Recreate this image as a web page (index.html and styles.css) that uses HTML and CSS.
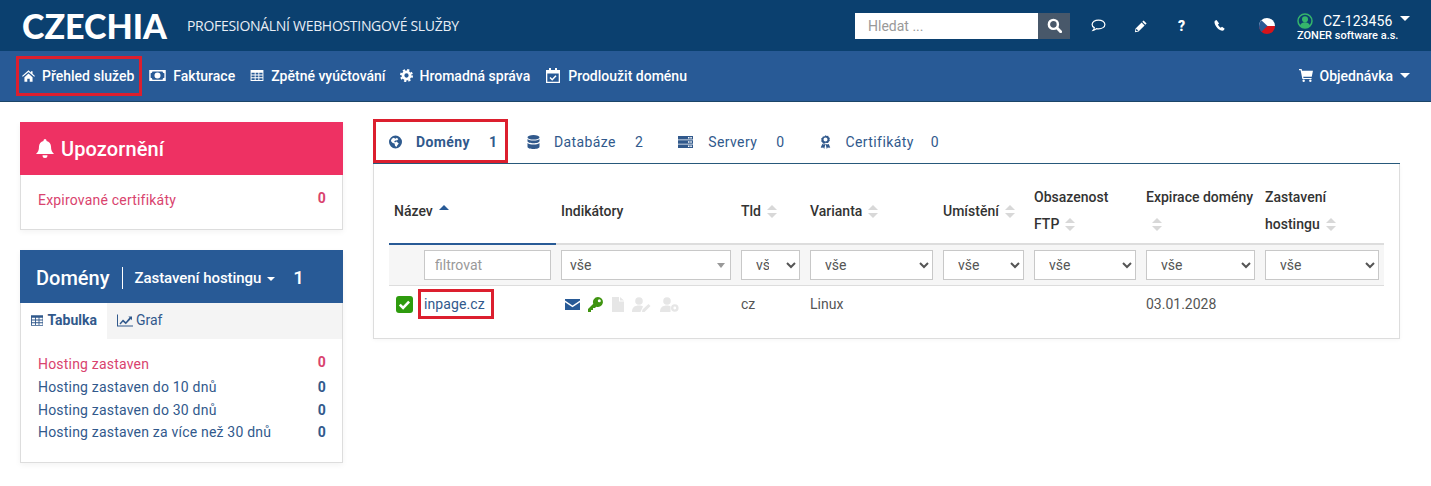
FILE: index.html
```html
<!DOCTYPE html>
<html lang="cs">
<head>
<meta charset="utf-8">
<title>Czechia</title>
<link rel="stylesheet" href="styles.css">
</head>
<body>
<header class="top">
  <div class="logo">CZECHIA</div>
  <div class="slogan">PROFESIONÁLNÍ WEBHOSTINGOVÉ SLUŽBY</div>
  <div class="search">
    <input class="search-input" type="text" placeholder="Hledat ...">
    <button class="search-btn" type="button"><svg class="ic14" viewBox="0 0 16 16"><circle cx="6.8" cy="6.8" r="4.8" fill="none" stroke="#fff" stroke-width="2.6"/><path d="M10.5 10.5L14.6 14.6" stroke="#fff" stroke-width="3" stroke-linecap="round"/></svg></button>
  </div>
  <div class="tools">
    <svg class="tool t-comment" viewBox="0 0 16 16"><path d="M8 2.2c3.7 0 6.8 2 6.8 4.7S11.700 11.500 8 11.500c-.8 0-1.500-.1-2.200-.2-.9.9-2.100 1.700-3.600 1.900.8-.9 1.300-1.800 1.300-2.900C1.900 9.500 1.200 8.300 1.200 6.900 1.200 4.200 4.300 2.200 8 2.200z" fill="none" stroke="#fff" stroke-width="1.300"/></svg>
    <svg class="tool t-pencil" viewBox="0 0 16 16"><path d="M11 1.600l3.400 3.400-1.500 1.500-3.400-3.400zM8.700 3.900l3.400 3.400-6.900 6.900-4.200.8.800-4.200zM2.700 11l-.5 2.800 2.800-.5z" fill="#fff" fill-rule="evenodd"/></svg>
    <span class="tool-q">?</span>
    <svg class="tool t-phone" viewBox="0 0 16 16"><path d="M4.400 1.200L2.400 2.200C1.500 3 1.700 5 2.800 7.300c1.300 2.700 3.500 5 5.800 6.300 2 1.100 3.700 1.200 4.600.3l1.200-1.800-3.300-2.600-1.600 1.200c-1-.5-2.800-2.500-3.400-4l1.400-1.300z" fill="#fff"/></svg>
    <svg class="tool t-flag" viewBox="0 0 16 16"><defs><clipPath id="flagclip"><circle cx="8" cy="8" r="8"/></clipPath></defs><g clip-path="url(#flagclip)"><rect width="16" height="8" fill="#fff"/><rect y="8" width="16" height="8" fill="#d7141a"/><path d="M0 0L8.500 8 0 16z" fill="#2a5a94"/></g></svg>
  </div>
  <div class="account">
    <div class="acc-line">
      <svg class="acc-ic" viewBox="0 0 16 16"><circle cx="8" cy="8" r="7" fill="none" stroke="#35b56b" stroke-width="1.500"/><circle cx="8" cy="6.200" r="3" fill="#35b56b"/><path d="M2.900 13c.6-2.500 2.600-3.700 5.100-3.700s4.500 1.200 5.100 3.700c-1.300 1.300-3 2-5.100 2s-3.800-.7-5.100-2z" fill="#35b56b"/></svg>
      <span class="acc-id">CZ-123456</span>
      <span class="caret acc-caret"></span>
    </div>
    <div class="acc-name">ZONER software a.s.</div>
  </div>
</header>

<nav class="nav">
  <a class="nav-item mark">
    <svg class="nav-ic i-home" viewBox="0 0 16 14"><path d="M8 0L0 6.900l1 1.100L8 2l7 6 1-1.100-3-2.600V1h-2v1.600z M3 8.500V14h3.500v-3.500h3V14H13V8.500L8 3.800z" fill="#fff"/></svg>Přehled služeb</a>
  <a class="nav-item">
    <svg class="nav-ic i-money" viewBox="0 0 18 12"><path fill-rule="evenodd" d="M0 0h18v12H0zM1.500 3.500v5a2 2 0 0 1 2 2h11a2 2 0 0 1 2-2v-5a2 2 0 0 1-2-2h-11a2 2 0 0 1-2 2zM9 2.700a3.300 3.300 0 1 1 0 6.600 3.300 3.300 0 0 1 0-6.600z" fill="#fff"/><rect x="8.300" y="4.200" width="1.600" height="3.800" fill="#fff"/></svg>Fakturace</a>
  <a class="nav-item">
    <svg class="nav-ic i-table" viewBox="0 0 14 12"><path fill-rule="evenodd" d="M0 0h14v12H0zM1 3v2h3.500V3zm4.500 0v2h3V3zm4 0v2H13V3zM1 6v2h3.500V6zm4.500 0v2h3V6zm4 0v2H13V6zM1 9v2h3.500V9zm4.500 0v2h3V9zm4 0v2H13V9z" fill="#fff"/></svg>Zpětné vyúčtování</a>
  <a class="nav-item">
    <svg class="nav-ic i-cog" viewBox="0 0 14 14"><circle cx="7" cy="7" r="3.800" fill="none" stroke="#fff" stroke-width="3"/><circle cx="7" cy="7" r="6" fill="none" stroke="#fff" stroke-width="2" stroke-dasharray="2.400 2.310"/></svg>Hromadná správa</a>
  <a class="nav-item">
    <svg class="nav-ic i-cal" viewBox="0 0 14 15"><path fill-rule="evenodd" d="M3 0h2v2h4V0h2v2h3v13H0V2h3zM1.300 5.500v8.200h11.400V5.500z" fill="#fff"/><path d="M4 9.500l2.200 2.200L10 7.800" fill="none" stroke="#fff" stroke-width="1.500"/></svg>Prodloužit doménu</a>
  <a class="nav-item nav-order">
    <svg class="nav-ic i-cart" viewBox="0 0 15 14"><path d="M0 0h2.800l.4 1.800H15l-1.300 6.500H4.500l.3 1.300h8.700v1.200H3.600L1.700 1.300H0z" fill="#fff"/><circle cx="5" cy="12.700" r="1.300" fill="#fff"/><circle cx="12.200" cy="12.700" r="1.300" fill="#fff"/></svg>Objednávka<span class="caret order-caret"></span></a>
</nav>

<main class="page">
  <aside class="side">
    <section class="card">
      <h2 class="card-head pink">
        <svg class="bell" viewBox="0 0 18 19"><path d="M9 0a1.500 1.500 0 0 1 1.500 1.500v.4C13.300 2.500 15 4.800 15 7.500c0 4 1 5.500 3 7.500H0c2-2 3-3.500 3-7.500 0-2.700 1.700-5 4.500-5.600v-.4A1.500 1.500 0 0 1 9 0zM6.600 16.200h4.800A2.400 2.400 0 0 1 9 19a2.400 2.400 0 0 1-2.400-2.800z" fill="#fff"/></svg>Upozornění</h2>
      <div class="list list-one">
        <div class="row red"><span>Expirované certifikáty</span><b>0</b></div>
      </div>
    </section>
    <section class="card">
      <div class="card-head blue">
        <span class="dom-title">Domény</span>
        <span class="dom-filter">Zastavení hostingu<span class="caret dom-caret"></span></span>
        <span class="dom-count">1</span>
      </div>
      <div class="card-tabs">
        <span class="ctab active"><svg class="ctab-ic" viewBox="0 0 14 12"><path fill-rule="evenodd" d="M0 0h14v12H0zM1 3v2h3.500V3zm4.500 0v2h3V3zm4 0v2H13V3zM1 6v2h3.500V6zm4.500 0v2h3V6zm4 0v2H13V6zM1 9v2h3.500V9zm4.500 0v2h3V9zm4 0v2H13V9z"/></svg>Tabulka</span>
        <span class="ctab"><svg class="ctab-ic wide" viewBox="0 0 16 12"><path d="M0 0h1v11h15v1H0z"/><path d="M2.500 9l3.500-4 2.800 2.400L12.500 3l-1.200-1H15v3.800l-1.200-1.400-5 5.300L6 7.300 3.500 10z"/></svg>Graf</span>
      </div>
      <div class="list">
        <div class="row red"><span>Hosting zastaven</span><b>0</b></div>
        <div class="row"><span>Hosting zastaven do 10 dnů</span><b>0</b></div>
        <div class="row"><span>Hosting zastaven do 30 dnů</span><b>0</b></div>
        <div class="row"><span>Hosting zastaven za více než 30 dnů</span><b>0</b></div>
      </div>
    </section>
  </aside>

  <section class="content">
    <div class="tabs">
      <a class="tab active mark">
        <svg class="tab-ic" viewBox="0 0 14 14"><path fill-rule="evenodd" d="M7 0a7 7 0 1 1 0 14A7 7 0 0 1 7 0zM5 2.500L3 3.500 2 6l2 2 2 .5.500 2.500 1.500 1.500 1-2 1.500-2L8 6.500 6.500 7.500 5.500 6.500 7.500 5l1 .5L10 4 8.500 2.500 7 3.500z" fill="#2f5b8f"/></svg><span class="tab-label">Domény</span><span class="tab-num">1</span></a>
      <a class="tab">
        <svg class="tab-ic" viewBox="0 0 13 14"><ellipse cx="6.500" cy="2.300" rx="6" ry="2.300"/><path d="M.500 4v2c0 1.300 2.700 2.300 6 2.300s6-1 6-2.300V4c-1.200 1-3.500 1.500-6 1.500S1.700 5 .500 4zM.500 8v3.700C.5 13 3.200 14 6.500 14s6-1 6-2.300V8c-1.200 1-3.500 1.500-6 1.500S1.700 9 .500 8z"/></svg><span class="tab-label">Databáze</span><span class="tab-num">2</span></a>
      <a class="tab">
        <svg class="tab-ic ic-srv" viewBox="0 0 15 12"><path fill-rule="evenodd" d="M0 0h15v3.400H0zM0 4.300h15v3.400H0zM0 8.600h15V12H0zM10 1v1.400h1.500V1zm2.300 0v1.400h1.500V1zM10 5.300v1.400h1.500V5.300zm2.300 0v1.400h1.500V5.300zM10 9.600V11h1.500V9.600zm2.300 0V11h1.500V9.600z"/></svg><span class="tab-label">Servery</span><span class="tab-num">0</span></a>
      <a class="tab">
        <svg class="tab-ic ic-cert" viewBox="0 0 12 15"><path fill-rule="evenodd" d="M6 0l1.300.9 1.600-.1.600 1.500 1.300.9-.5 1.500.5 1.500-1.300.9-.6 1.500-1.600-.1L6 8.400l-1.300.9-1.600-.1-.6-1.500-1.300-.9.500-1.500-.5-1.500 1.300-.9.600-1.500 1.600.1zM6 2.500a2.200 2.200 0 1 0 0 4.400 2.200 2.200 0 0 0 0-4.400z"/><path d="M2.500 9.800l1.800.3L6 9.300l-1.400 5.700-1-1.500-1.800.3-1-.2zM9.500 9.800l-1.800.3L6 9.300l1.400 5.700 1-1.500 1.800.3 1-.2z"/></svg><span class="tab-label">Certifikáty</span><span class="tab-num">0</span></a>
    </div>
    <div class="panel">
      <table class="grid">
        <colgroup>
          <col class="c-check"><col class="c-name"><col class="c-ind"><col class="c-tld"><col class="c-var"><col class="c-loc"><col class="c-ftp"><col class="c-exp"><col class="c-stop">
        </colgroup>
        <thead>
          <tr class="heads">
            <th colspan="2" class="sorted">Název<span class="asc"></span></th>
            <th>Indikátory</th>
            <th>Tld<span class="sort"></span></th>
            <th>Varianta<span class="sort"></span></th>
            <th>Umístění<span class="sort"></span></th>
            <th>Obsazenost FTP<span class="sort"></span></th>
            <th>Expirace domény<span class="sort"></span></th>
            <th>Zastavení hostingu<span class="sort"></span></th>
          </tr>
          <tr class="filters">
            <td></td>
            <td><input class="fld" type="text" placeholder="filtrovat"></td>
            <td><div class="fake-select">vše<span class="fake-caret"></span></div></td>
            <td><select class="fsel"><option>vše</option></select></td>
            <td><select class="fsel"><option>vše</option></select></td>
            <td><select class="fsel"><option>vše</option></select></td>
            <td><select class="fsel"><option>vše</option></select></td>
            <td><select class="fsel"><option>vše</option></select></td>
            <td><select class="fsel"><option>vše</option></select></td>
          </tr>
        </thead>
        <tbody>
          <tr class="data">
            <td class="cell-check"><svg class="chk" viewBox="0 0 17 17"><rect width="17" height="17" rx="3" fill="#2e9b0e"/><path d="M3.800 8.600l3.300 3.300 6-6.200" fill="none" stroke="#fff" stroke-width="2.600"/></svg></td>
            <td><a class="domain mark">inpage.cz</a></td>
            <td class="inds">
              <svg class="ind i-mail" viewBox="0 0 15 11"><path d="M0 0h15v1.500L7.500 6.500 0 1.500zM0 3.200l7.500 5 7.500-5V11H0z" fill="#285a96"/></svg>
              <svg class="ind i-key" viewBox="0 0 15 15"><path fill-rule="evenodd" d="M10 0a5 5 0 1 1-1.800 9.700L7 11H5v2H3v2H0v-3l5.300-5.200A5 5 0 0 1 10 0zm1.300 2.200a1.500 1.500 0 1 0 0 3 1.500 1.500 0 0 0 0-3z" fill="#3f9410"/></svg>
              <svg class="ind i-file" viewBox="0 0 12 15"><path d="M0 0h7v4.500h5V15H0zM8 0l4 3.500H8z" fill="#e6e6e6"/></svg>
              <svg class="ind i-usr" viewBox="0 0 19 15"><circle cx="7" cy="4" r="3.800" fill="#e6e6e6"/><path d="M0 15c0-4.500 2.500-6.500 7-6.500 2 0 3 .4 4 1L8.500 15zM10 15l.5-2.500 6-5.500 2 2-6 6z" fill="#e6e6e6"/></svg>
              <svg class="ind i-usr" viewBox="0 0 19 15"><circle cx="7" cy="4" r="3.800" fill="#e6e6e6"/><path d="M0 15c0-4.500 2.500-6.500 7-6.500 1.500 0 2.500.3 3.500.8V15z" fill="#e6e6e6"/><circle cx="14.800" cy="11" r="2.600" fill="none" stroke="#e6e6e6" stroke-width="2.400"/></svg>
            </td>
            <td>cz</td>
            <td>Linux</td>
            <td></td>
            <td></td>
            <td>03.01.2028</td>
            <td></td>
          </tr>
        </tbody>
      </table>
    </div>
  </section>
</main>
</body>
</html>
```

FILE: styles.css
```css
* { box-sizing: border-box; }
html, body { margin: 0; padding: 0; }
body {
  width: 1431px;
  height: 486px;
  overflow: hidden;
  background: #fff;
  font-family: Roboto, "Liberation Sans", sans-serif;
  font-size: 14px;
  color: #444;
}
.top {
  height: 51px;
  background: #0b406f;
  display: flex;
  align-items: center;
  color: #fff;
}
.logo {
  margin-left: 22px;
  font-family: Lato, "Open Sans", sans-serif;
  font-weight: 900;
  font-size: 34px;
  width: 165px;
}
.slogan {
  font-family: "Open Sans", sans-serif;
  font-size: 14px;
  letter-spacing: -0.3px;
  color: #e8eef5;
}
.search { margin-left: auto; display: flex; height: 26px; }
.search-input {
  width: 183px;
  height: 26px;
  border: 0;
  padding: 0 13px;
  font: 14px Roboto, sans-serif;
  background: #fff;
}
.search-input::placeholder { color: #999; opacity: 1; }
.search-btn {
  width: 32px;
  height: 26px;
  border: 0;
  padding: 0;
  background: #48586a;
  display: flex;
  align-items: center;
  justify-content: center;
}
.ic14 { width: 15px; height: 15px; }
.tools { display: flex; align-items: center; margin-left: 21px; height: 26px; }
.tool { display: block; }
.t-comment { width: 15px; height: 15px; }
.t-pencil { width: 14px; height: 14px; margin-left: 28px; }
.tool-q { font-weight: 900; font-size: 14px; margin-left: 30px; width: 8px; }
.t-phone { width: 13px; height: 13px; margin-left: 27px; }
.t-flag { width: 16px; height: 16px; margin-left: 33px; }
.account { margin-left: 22px; width: 134px; font-size: 14px; line-height: 14px; margin-top: 5px; }
.acc-line { display: flex; align-items: center; height: 15px; }
.acc-ic { width: 16px; height: 16px; }
.acc-id { margin-left: 10px; letter-spacing: .1px; }
.acc-caret { margin-left: 8px; margin-top: -4px; }
.acc-name { font-size: 11px; font-weight: 500; line-height: 14px; margin-top: 1px; }
.caret {
  display: inline-block;
  width: 0;
  height: 0;
  border-left: 5px solid transparent;
  border-right: 5px solid transparent;
  border-top: 5px solid #fff;
}
.nav {
  height: 51px;
  background: #285a96;
  border-bottom: 1px solid #1b4568;
  display: flex;
  align-items: center;
  padding-left: 16px;
  padding-right: 14px;
}
.nav-item {
  display: flex;
  align-items: center;
  height: 40px;
  padding: 0 4px 1px;
  border: 3px solid transparent;
  color: #fff;
  font-weight: 500;
  font-size: 14px;
  white-space: nowrap;
}
.nav-item:first-child { padding: 0 5px 1px 3px; }
.nav-order { margin-left: auto; }
.nav-ic { margin-right: 7px; flex: none; }
.i-home { width: 13px; height: 12px; }
.i-money { width: 17px; height: 11px; }
.i-table { width: 14px; height: 11px; margin-left: 1px; }
.i-cog { width: 13px; height: 13px; }
.i-cal { width: 14px; height: 15px; margin-left: 2px; margin-right: 8px; }
.i-cart { width: 14px; height: 13px; }
.order-caret { margin-left: 7px; }
.page { display: flex; padding: 20px 31px 0 20px; }
.side { width: 323px; flex: none; }
.card {
  border: 1px solid #ddd;
  border-top: 0;
  box-shadow: 0 2px 6px rgba(0,0,0,.05);
  margin-bottom: 20px;
}
.card-head {
  height: 53px;
  margin: 0 -1px;
  display: flex;
  align-items: center;
  color: #fff;
  padding-left: 16px;
}
.pink { background: #ee3163; font-size: 20px; font-weight: 500; letter-spacing: .1px; }
.blue { background: #285a96; padding-top: 2px; }
.bell { width: 18px; height: 19px; margin-right: 7px; }
.list { padding: 14px 16px 17.500px 17px; }
.list-one { padding: 14px 16px 17.500px 17px; }
.row {
  display: flex;
  justify-content: space-between;
  line-height: 22.700px;
  letter-spacing: .2px;
  color: #31598c;
}
.row b { font-weight: 700; }
.row.red { color: #d9436e; }
.row.red b { margin-top: -2px; }
.dom-title { font-size: 20px; font-weight: 500; padding-right: 13px; border-right: 1px solid #fff; line-height: 22px; }
.dom-filter { margin-left: 11px; font-size: 15px; font-weight: 500; letter-spacing: -.05px; }
.dom-caret { margin-left: 6px; vertical-align: 2px; border-width: 4px 4px 0; }
.dom-count { margin-left: 18px; font-size: 19px; font-weight: 500; }
.card-tabs { display: flex; height: 36px; background: #f4f4f4; padding-bottom: 2px; }
.ctab {
  display: flex;
  align-items: center;
  padding: 0 10px;
  color: #31598c;
  font-size: 14px;
}
.ctab.active { background: #fff; font-weight: 700; width: 86px; margin-bottom: -2px; padding-bottom: 2px; }
.ctab-ic { width: 13px; height: 11px; margin-right: 4px; fill: #31598c; }
.ctab-ic.wide { width: 16px; height: 13px; margin-right: 3px; }
.content { margin-left: 30px; flex: 1; }
.tabs {
  height: 45px;
  display: flex;
  align-items: flex-start;
  border-bottom: 1px solid #285a7c;
  margin-top: -3px;
}
.tab {
  height: 44px;
  display: flex;
  align-items: center;
  padding: 2px 8px 0 13px;
  border: 3px solid transparent;
  color: #31598c;
  margin-right: 8px;
  font-size: 14px;
  letter-spacing: .4px;
}
.tab.active { font-weight: 700; width: 135px; margin-right: 3px; }
.tab-ic { width: 13px; height: 14px; margin-right: 14px; fill: #31598c; flex: none; }
.ic-srv { width: 15px; height: 12px; margin-right: 15px; }
.ic-cert { width: 11px; height: 14px; margin-right: 15px; }
.tab-num { margin-left: 19px; }
.tab:last-child .tab-num { margin-left: 17px; }
.panel {
  border: 1px solid #ddd;
  border-top: 0;
  padding: 18px 15px 16px;
  height: 175px;
  box-shadow: 0 1px 4px rgba(0,0,0,.04);
}
.grid { width: 995px; table-layout: fixed; border-collapse: collapse; }
.c-check { width: 30px; }
.c-name { width: 137px; }
.c-ind { width: 180px; }
.c-tld { width: 69px; }
.c-var { width: 133px; }
.c-loc { width: 91px; }
.c-ftp { width: 112px; }
.c-exp { width: 119px; }
.c-stop { width: 124px; }
.heads th {
  height: 60px;
  padding: 2px 5px 5px;
  text-align: left;
  font-weight: 500;
  font-size: 14px;
  line-height: 27px;
  color: #333;
  border-bottom: 2px solid #ddd;
}
.heads th.sorted { border-bottom-color: #285a96; }
.sort, .asc {
  display: inline-block;
  margin-left: 6px;
  position: relative;
  width: 10px;
  height: 13px;
  vertical-align: -2px;
}
.sort::before, .sort::after, .asc::before {
  content: "";
  position: absolute;
  left: 0;
  border-left: 5px solid transparent;
  border-right: 5px solid transparent;
}
.sort::before { top: 0; border-bottom: 5px solid #d8d8d8; }
.sort::after { bottom: 0; border-top: 5px solid #d8d8d8; }
.asc::before { top: 0; border-bottom: 5px solid #285a96; }
.filters td { background: #f6f6f6; padding: 5px; height: 40px; border-bottom: 1px solid #ddd; }
.fld, .fake-select, .fsel {
  display: block;
  width: 100%;
  height: 30px;
  border: 1px solid #c8c8c8;
  background: #fff;
  font: 14px Roboto, sans-serif;
  color: #555;
}
.fld { padding: 0 10px; }
.fld::placeholder { color: #999; opacity: 1; }
.fake-select {
  padding: 0 8px;
  line-height: 28px;
  position: relative;
}
.fake-caret {
  position: absolute;
  right: 5px;
  top: 12px;
  border-left: 4px solid transparent;
  border-right: 4px solid transparent;
  border-top: 5px solid #999;
}
.fsel { padding: 0 14px 0 10px; border-radius: 0; }
.data td { height: 37px; padding: 0 5px; color: #555; font-size: 14px; vertical-align: middle; border-bottom: 1px solid transparent; }
.cell-check { padding: 0 0 0 7px !important; }
.chk { display: block; width: 17px; height: 17px; }
.domain {
  display: inline-block;
  color: #31598c;
  font-size: 14px;
  line-height: 24px;
  padding: 0 6px 0 3px;
  margin-left: -6px;
  letter-spacing: .1px;
}
.inds { padding-left: 9px !important; white-space: nowrap; font-size: 0; }
.ind { display: inline-block; vertical-align: middle; margin-right: 5px; height: 15px; }
.i-mail { width: 15px; height: 11px; }
.i-key { width: 15px; }
.i-file { width: 12px; height: 15px; }
.i-usr { width: 19px; }
.mark { border: 3px solid #dc1f2e; }
```
